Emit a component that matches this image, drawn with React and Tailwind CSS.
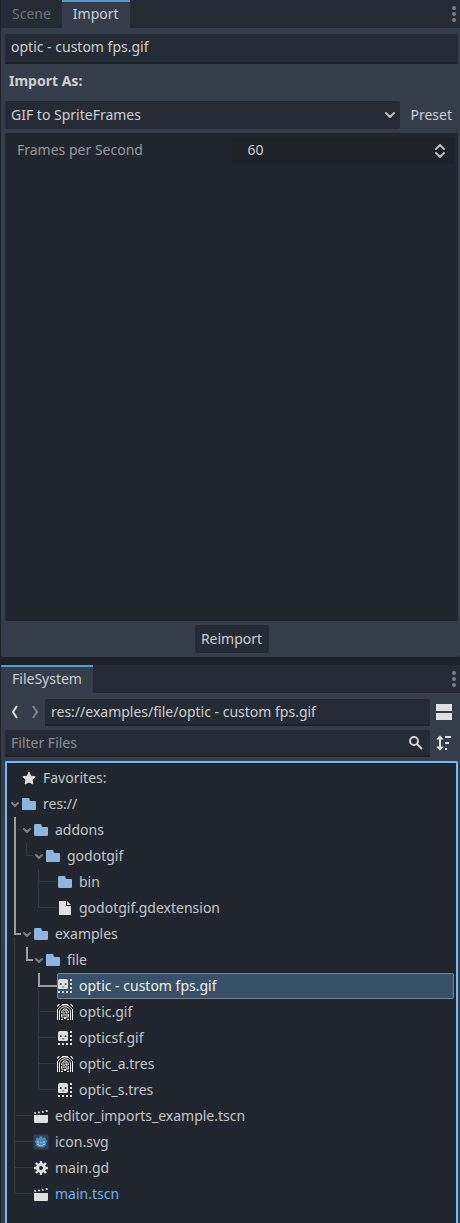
import { useState } from "react";

const FOLDER = "folder";

const ROWS = [
  { name: "Favorites:", depth: 0, icon: "star" },
  { name: "res://", depth: 0, icon: FOLDER, branch: true },
  { name: "addons", depth: 1, icon: FOLDER, branch: true, thick: "M8 0V26", thin: "M11 12.5H14" },
  { name: "godotgif", depth: 2, icon: FOLDER, branch: true, thick: "M8 0V26", thin: "M19.5 0V12.5H26" },
  { name: "bin", depth: 3, icon: FOLDER, thick: "M8 0V26", thin: "M31.5 0V26M31.5 12.5H50" },
  { name: "godotgif.gdextension", depth: 3, icon: "file", thick: "M8 0V26", thin: "M31.5 0V12.5H50" },
  { name: "examples", depth: 1, icon: FOLDER, branch: true, thick: "M8 0V13H14", thin: "M7.5 16V26" },
  { name: "file", depth: 2, icon: FOLDER, branch: true, thick: "M20 0V13H26", thin: "M7.5 0V26" },
  { name: "optic - custom fps.gif", depth: 3, icon: "frames", thick: "M32 0V13H50", thin: "M7.5 0V26M31.5 16V26" },
  { name: "optic.gif", depth: 3, icon: "optic", thin: "M7.5 0V26M31.5 0V26M31.5 12.5H49" },
  { name: "opticsf.gif", depth: 3, icon: "frames", thin: "M7.5 0V26M31.5 0V26M31.5 12.5H49" },
  { name: "optic_a.tres", depth: 3, icon: "optic", thin: "M7.5 0V26M31.5 0V26M31.5 12.5H49" },
  { name: "optic_s.tres", depth: 3, icon: "frames", thin: "M7.5 0V26M31.5 0V12.5H49" },
  { name: "editor_imports_example.tscn", depth: 1, icon: "scene", thin: "M7.5 0V26M7.5 12.5H26" },
  { name: "icon.svg", depth: 1, icon: "godot", thin: "M7.5 0V26M7.5 12.5H26" },
  { name: "main.gd", depth: 1, icon: "gear", thin: "M7.5 0V26M7.5 12.5H26" },
  { name: "main.tscn", depth: 1, icon: "scene", accent: true, thin: "M7.5 0V12.5H26" },
];

function Frames() {
  return (
    <g fill="#e0e0e0">
      <path
        fillRule="evenodd"
        d="M3 1h6a2 2 0 0 1 2 2v6.500a1.500 1.500 0 0 1-1.500 1.500h-7A1.500 1.500 0 0 1 1 9.500V3a2 2 0 0 1 2-2zM3 5.200v1.800h1.600V5.200zM7.700 5.200v1.800h1.600V5.200zM5 8.400v.8h2.200v-.8z"
      />
      <path d="M13 1h2v2h-2zM13 5h2v2h-2zM13 9h2v2h-2zM13 13h2v2h-2zM9 13h2v2H9zM5 13h2v2H5zM1 13h2v2H1z" />
    </g>
  );
}

function Optic() {
  return (
    <g>
      <path d="M0 0h16v16H0z" fill="#0c0c0c" />
      <g fill="none" stroke="#f6f6f6">
        <path d="M.5 16V5M15.500 16V5M0 2.500 2.500 0M16 2.500 13.500 0" strokeWidth="1.200" />
        <path d="M2.500 16V8C2.500 1 13.500 1 13.500 8v8M4.500 9C4.500 3.500 11.500 3.500 11.500 9M1 5C4-.5 12-.5 15 5M5 .5h6" />
        <path d="M4.500 10v3M11.500 10v3M4 15.500h2M10 15.500h2" />
      </g>
      <path d="M6.500 5h3l1.500 4-.5 1 1.500 4.500H9.500L8 11.500l-1.500 3H4L5.500 10 5 9z" fill="#8d8d8d" />
      <path d="M7 7h1v1H7zM8 9h1v1H8zM6 12h1v1H6z" fill="#222" />
      <path d="M6 5h1v1H6zM9 5h1v1H9zM9 8h1v1H9zM7 13h2v2H7z" fill="#eee" />
    </g>
  );
}

function Icon({ name }) {
  return (
    <svg width="16" height="16" viewBox="0 0 16 16" className="shrink-0" aria-hidden="true">
      {name === "folder" && (
        <path
          fill="#8ab6df"
          d="M2 2a1 1 0 0 0-1 1v10a1 1 0 0 0 1 1h12a1 1 0 0 0 1-1V6a1 1 0 0 0-1-1H10a1.500 1.500 0 0 1-1.500-1.500V3a1 1 0 0 0-1-1z"
        />
      )}
      {name === "star" && (
        <path
          fill="#e0e0e0"
          stroke="#e0e0e0"
          strokeLinejoin="round"
          d="M8 2.200 6.200 6.200 1.800 6.700 5 9.700 4.200 14 8 11.900 11.800 14 11 9.700 14.200 6.700 9.800 6.200z"
        />
      )}
      {name === "file" && <path fill="#e0e0e0" d="M2 1v14h12V6H9V1zM10 1v4h4z" />}
      {name === "scene" && (
        <path
          fill="#e0e0e0"
          d="M1 7h14v7a1 1 0 0 1-1 1H2a1 1 0 0 1-1-1zM1 4.300l1.500-.3.800 1.700-1.800.3zM4.700 3.700l1.600-.3.900 1.700-1.700.3zM8.600 3l1.600-.3.800 1.700-1.700.3zM12.400 2.300l1.800-.3.800 1.700-1.800.3z"
        />
      )}
      {name === "gear" && (
        <g>
          <circle cx="8" cy="8" r="3.500" fill="none" stroke="#e0e0e0" strokeWidth="3" />
          <path
            stroke="#e0e0e0"
            strokeWidth="2.400"
            d="M8 1v3M8 12v3M1 8h3M12 8h3M3 3l2 2M11 11l2 2M13 3l-2 2M5 11l-2 2"
          />
        </g>
      )}
      {name === "godot" && (
        <g>
          <rect x=".5" y=".5" width="15" height="15" rx="1.500" fill="#363d52" />
          <path
            fill="#478cbf"
            d="M3 4.500 4.300 3.300l1.200.7 1-.3.300-1.400h2.400l.3 1.400 1 .3 1.200-.7L13 4.500l-.3 1.700 1.200.3v2l-.9.500v2c-.8 3.200-9.200 3.200-10 0V9l-.9-.5v-2l1.200-.3z"
          />
          <path fill="#fff" d="M4.500 7.200H6v1.300H4.500zM10 7.200h1.500v1.300H10zM7.700 8h.6v1.200h-.6zM4.500 10.300h1.200v.8H4.500zM6.400 10.900h1v.8h-1zM8.600 10.900h1v.8h-1zM10.300 10.300h1.200v.8h-1.200z" />
          <path fill="#414042" d="M5 7.500h.8v.8H5zM10.200 7.500h.8v.8h-.8z" />
        </g>
      )}
      {name === "frames" && <Frames />}
      {name === "optic" && <Optic />}
    </svg>
  );
}

function TreeRow({ row, selected, onSelect }) {
  const guide = (row.branch ? 2 : 14) + row.depth * 12;
  return (
    <li role="treeitem" aria-selected={selected} className="flex h-[26px] items-stretch">
      <svg width={guide} height="26" className="shrink-0" fill="none" aria-hidden="true">
        {row.thin && <path d={row.thin} stroke="#353941" />}
        {row.thick && <path d={row.thick} stroke="#9b9da1" strokeWidth="2" />}
      </svg>
      {row.branch && (
        <button aria-label={"Collapse " + row.name} className="flex w-3 shrink-0 items-center justify-center">
          <svg width="12" height="12" fill="none" stroke="#7c7f84" strokeWidth="2" strokeLinecap="round" strokeLinejoin="round" aria-hidden="true">
            <path d="M3 5l3 3 3-3" />
          </svg>
        </button>
      )}
      <button
        onClick={onSelect}
        className={
          "mr-0.5 flex min-w-0 flex-1 items-center gap-1.5 whitespace-nowrap rounded-xs text-left " +
          (selected
            ? "bg-[#385068] text-[#f2f2f2] outline-1 -outline-offset-1 outline-[#77808a]"
            : row.accent
              ? "text-[#6cb3f0]"
              : "text-[#c4c6c8]")
        }
      >
        <Icon name={row.icon} />
        {row.name}
      </button>
    </li>
  );
}

function Dots({ label }) {
  return (
    <button aria-label={label} className="ml-auto flex w-3 items-center justify-center">
      <svg width="4" height="16" fill="#7b7f85" aria-hidden="true">
        <circle cx="2" cy="2" r="2" />
        <circle cx="2" cy="8" r="2" />
        <circle cx="2" cy="14" r="2" />
      </svg>
    </button>
  );
}

const FIELD = "border-b-2 border-[#1d2229] bg-[#252b34] text-[#cdcfd2] outline-none";

export default function App() {
  const [selected, setSelected] = useState(8);
  const [fps, setFps] = useState("60");

  return (
    <div className="flex min-h-screen flex-col gap-2 bg-[#1d2229] pl-px font-['Noto_Sans',sans-serif] text-sm leading-5 text-[#cdcfd2]">
      <section className="flex flex-1 flex-col rounded-b-xs bg-[#363d4a]">
        <div role="tablist" className="flex h-7 shrink-0 bg-[#252b34]">
          <button role="tab" aria-selected="false" className="px-[11px] text-[#6f747b]">
            Scene
          </button>
          <button role="tab" aria-selected="true" className="border-t-2 border-[#5697cd] bg-[#363d4a] px-[11px] pb-0.5">
            Import
          </button>
          <Dots label="Import dock options" />
        </div>
        <div className="flex flex-1 flex-col gap-1 pt-1.5 pr-0.5 pb-1 pl-1">
          <input
            aria-label="Imported file"
            readOnly
            value="optic - custom fps.gif"
            className={"h-[30px] w-full rounded-t-xs px-1.5 pb-1 " + FIELD}
          />
          <label htmlFor="importer" className="mb-1 px-1 py-0.5 pt-[3px] font-bold">
            Import As:
          </label>
          <div className="flex h-7 items-stretch">
            <div className="grid flex-1 rounded-xs bg-[#252b34]">
              <select
                id="importer"
                className="col-start-1 row-start-1 appearance-none bg-transparent px-1.5 outline-none"
              >
                <option>GIF to SpriteFrames</option>
              </select>
              <svg
                width="12"
                height="12"
                fill="none"
                stroke="#c0c2c5"
                strokeWidth="2"
                className="pointer-events-none col-start-1 row-start-1 mr-1 self-center justify-self-end"
                strokeLinecap="round"
                strokeLinejoin="round"
                aria-hidden="true"
              >
                <path d="M2 4l4 4 4-4" />
              </svg>
            </div>
            <button className="pr-1.5 pl-2.5">Preset</button>
          </div>
          <div className="flex-1 rounded-xs bg-[#21262e] p-1">
            <div className="flex h-[27px] items-center pl-2">
              <label htmlFor="fps" className="flex-1 pb-px text-[#97999d]">
                Frames per Second
              </label>
              <div className="flex h-[27px] flex-1 items-center rounded-xs bg-[#1e2228] pr-2">
                <input
                  id="fps"
                  value={fps}
                  onChange={(e) => setFps(e.target.value)}
                  className="w-full min-w-0 flex-1 bg-transparent pb-px pl-4 outline-none"
                />
                <svg width="12" height="16" fill="none" stroke="#b9bbbd" strokeWidth="2" strokeLinecap="round" strokeLinejoin="round" aria-hidden="true">
                  <path d="M2 6l4-4 4 4M2 10l4 4 4-4" />
                </svg>
              </div>
            </div>
          </div>
          <button className="h-7 min-w-[74px] self-center rounded-xs bg-[#252b34] px-1.5">Reimport</button>
        </div>
      </section>

      <section className="flex flex-col bg-[#363d4a]">
        <div role="tablist" className="flex h-7 bg-[#252b34]">
          <button role="tab" aria-selected="true" className="border-t-2 border-[#5697cd] bg-[#363d4a] px-[11px] pb-0.5">
            FileSystem
          </button>
          <Dots label="FileSystem dock options" />
        </div>
        <div className="flex flex-col gap-1 pt-1.5 pr-0.5 pl-1">
          <div className="flex h-[27px] items-center">
            <button aria-label="Back" className="flex w-5 justify-center pb-px">
              <svg width="8" height="14" fill="none" stroke="#e0e0e0" strokeWidth="2" aria-hidden="true">
                <path d="M6 1 2 7l4 6" />
              </svg>
            </button>
            <button aria-label="Forward" className="flex w-5 justify-center pb-px">
              <svg width="8" height="14" fill="none" stroke="#7f838a" strokeWidth="2" aria-hidden="true">
                <path d="M2 1l4 6-4 6" />
              </svg>
            </button>
            <input
              aria-label="Path"
              defaultValue="res://examples/file/optic - custom fps.gif"
              className={"h-full min-w-0 flex-1 rounded-t-xs px-1.5 " + FIELD}
            />
            <button aria-label="Toggle split mode" className="mr-1 ml-1 px-0.5 pt-0.5 pb-[3px]">
              <svg width="16" height="16" fill="#e0e0e0" aria-hidden="true">
                <path d="M0 0h16v7H0zM0 9h16v7H0z" />
              </svg>
            </button>
          </div>
          <div className="flex h-[27px] items-center">
            <div className={"flex h-full min-w-0 flex-1 items-center rounded-t-xs px-1.5 " + FIELD}>
              <input
                aria-label="Filter Files"
                placeholder="Filter Files"
                className="min-w-0 flex-1 bg-transparent outline-none placeholder:text-[#8d9196]"
              />
              <svg width="16" height="16" fill="none" stroke="#d2d4d6" strokeWidth="2" aria-hidden="true">
                <circle cx="6" cy="6" r="4" />
                <path d="M9 9l5 5" />
              </svg>
            </div>
            <button aria-label="Sort files" className="mr-1 ml-1 px-0.5 pt-0.5 pb-[3px]">
              <svg width="16" height="16" fill="#e0e0e0" aria-hidden="true">
                <path d="M4 .5 7.200 3.500V4.500H5v7h2.200v1L4 15.500.8 12.500v-1H3v-7H.8v-1zM9 1h6v2H9zM9 7h4v2H9zM9 13h2v2H9z" />
              </svg>
            </button>
          </div>
          <ul role="tree" className="rounded-t-xs border-x-2 border-t-2 border-[#70bafa] bg-[#21262e] pt-0.5 pb-4">
            {ROWS.map((row, i) => (
              <TreeRow key={row.name} row={row} selected={selected === i} onSelect={() => setSelected(i)} />
            ))}
          </ul>
        </div>
      </section>
    </div>
  );
}
